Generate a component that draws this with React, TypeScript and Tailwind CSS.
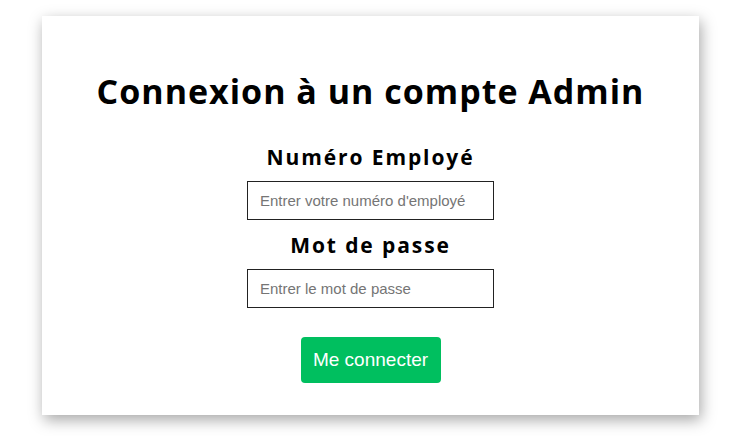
export default function App() {
  return (
    <div className="min-h-[436px] w-full bg-white pt-4">
      <div className="mx-auto flex h-[399px] w-[657px] flex-col items-center bg-white pt-[53px] shadow-[2px_5px_14px_rgba(0,0,0,0.35)]">
        <h1 className="text-[34px] leading-[44px] font-bold tracking-[1px] text-black [font-family:'Open_Sans',sans-serif]">
          Connexion à un compte Admin
        </h1>

        <label
          htmlFor="employe"
          className="mt-[30px] text-[21px] leading-[28px] font-bold tracking-[1.9px] text-black [font-family:'Open_Sans',sans-serif]"
        >
          Numéro Employé
        </label>
        <input
          id="employe"
          type="text"
          placeholder="Entrer votre numéro d'employé"
          className="mt-[10px] h-[39px] w-[247px] border border-[#222] px-3 text-[15px] text-black outline-none placeholder:text-[#757575] [font-family:'Liberation_Sans',Arial,sans-serif]"
        />

        <label
          htmlFor="motdepasse"
          className="mt-[11px] text-[21px] leading-[28px] font-bold tracking-[1.9px] text-black [font-family:'Open_Sans',sans-serif]"
        >
          Mot de passe
        </label>
        <input
          id="motdepasse"
          type="password"
          placeholder="Entrer le mot de passe"
          className="mt-[10px] h-[39px] w-[247px] border border-[#222] px-3 text-[15px] text-black outline-none placeholder:text-[#757575] [font-family:'Liberation_Sans',Arial,sans-serif]"
        />

        <button
          type="button"
          className="mt-[29px] h-[46px] w-[140px] rounded-[4px] bg-[#00bf5f] text-[19px] text-white [font-family:'Liberation_Sans',Arial,sans-serif]"
        >
          Me connecter
        </button>
      </div>
    </div>
  );
}
